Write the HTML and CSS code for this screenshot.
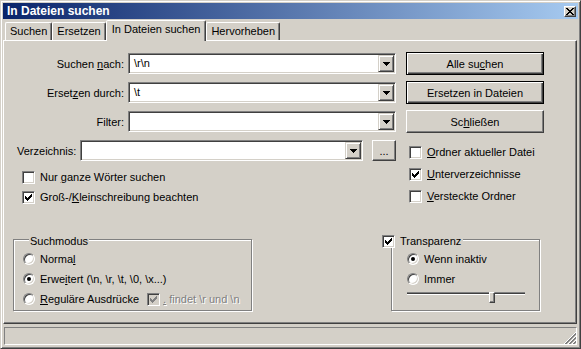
FILE: index.html
```html
<!DOCTYPE html>
<html lang="de">
<head>
    <meta charset="UTF-8">
    <title>In Dateien suchen</title>
    <link rel="stylesheet" href="styles.css">
</head>
<body>
    <div class="window">
        <div class="titlebar">
            <span>In Dateien suchen</span>
            <button class="close" aria-label="Schließen">
                <svg width="8" height="7" viewBox="0 0 8 7"><path d="M0 0h2v1H0zM6 0h2v1H6zM1 1h2v1H1zM5 1h2v1H5zM2 2h4v1H2zM3 3h2v1H3zM2 4h4v1H2zM1 5h2v1H1zM5 5h2v1H5zM0 6h2v1H0zM6 6h2v1H6z"/></svg>
            </button>
        </div>

        <div class="tabs">
            <div class="tab">Suchen</div>
            <div class="tab">Ersetzen</div>
            <div class="tab active">In Dateien suchen</div>
            <div class="tab">Hervorheben</div>
        </div>

        <div class="panel">
            <div class="top">
                <div class="form">
                    <div class="rows">
                        <div class="row">
                            <label>Suchen <u>n</u>ach:</label>
                            <div class="combo"><span class="value">\r\n</span><span class="drop"><svg width="7" height="4" viewBox="0 0 7 4"><path d="M0 0h7v1H0zM1 1h5v1H1zM2 2h3v1H2zM3 3h1v1H3z"/></svg></span></div>
                        </div>
                        <div class="row">
                            <label>Erset<u>z</u>en durch:</label>
                            <div class="combo"><span class="value">\t</span><span class="drop"><svg width="7" height="4" viewBox="0 0 7 4"><path d="M0 0h7v1H0zM1 1h5v1H1zM2 2h3v1H2zM3 3h1v1H3z"/></svg></span></div>
                        </div>
                        <div class="row">
                            <label>Filter:</label>
                            <div class="combo"><span class="value"></span><span class="drop"><svg width="7" height="4" viewBox="0 0 7 4"><path d="M0 0h7v1H0zM1 1h5v1H1zM2 2h3v1H2zM3 3h1v1H3z"/></svg></span></div>
                        </div>
                        <div class="row dir">
                            <label>Verzeichnis:</label>
                            <div class="combo"><span class="value"></span><span class="drop"><svg width="7" height="4" viewBox="0 0 7 4"><path d="M0 0h7v1H0zM1 1h5v1H1zM2 2h3v1H2zM3 3h1v1H3z"/></svg></span></div>
                            <button class="btn browse">...</button>
                        </div>
                    </div>
                    <div class="checks left">
                        <div class="opt"><span class="check"></span><span>Nur <u>g</u>anze Wörter suchen</span></div>
                        <div class="opt"><span class="check"><svg width="7" height="7" viewBox="0 0 7 7"><path d="M6 0h1v1H6zM5 1h2v1H5zM0 2h1v1H0zM4 2h3v1H4zM0 3h2v1H0zM3 3h3v1H3zM0 4h5v1H0zM1 5h3v1H1zM2 6h1v1H2z"/></svg></span><span>Groß-/<u>K</u>leinschreibung beachten</span></div>
                    </div>
                </div>

                <div class="side">
                    <div class="buttons">
                        <button class="btn default">Alle su<u>c</u>hen</button>
                        <button class="btn default">Ersetzen in Dateien</button>
                        <button class="btn">Sc<u>h</u>ließen</button>
                    </div>
                    <div class="checks right">
                        <div class="opt"><span class="check"></span><span><u>O</u>rdner aktueller Datei</span></div>
                        <div class="opt"><span class="check"><svg width="7" height="7" viewBox="0 0 7 7"><path d="M6 0h1v1H6zM5 1h2v1H5zM0 2h1v1H0zM4 2h3v1H4zM0 3h2v1H0zM3 3h3v1H3zM0 4h5v1H0zM1 5h3v1H1zM2 6h1v1H2z"/></svg></span><span><u>U</u>nterverzeichnisse</span></div>
                        <div class="opt"><span class="check"></span><span><u>V</u>ersteckte Ordner</span></div>
                    </div>
                </div>
            </div>

            <div class="groups">
                <fieldset class="group mode">
                    <legend>Suchmodus</legend>
                    <div class="opt"><span class="radio"></span><span>Norma<u>l</u></span></div>
                    <div class="opt"><span class="radio on"></span><span>Erwe<u>i</u>tert (\n, \r, \t, \0, \x...)</span></div>
                    <div class="opt"><span class="radio"></span><span><u>R</u>eguläre Ausdrücke</span><span class="check disabled"><svg width="7" height="7" viewBox="0 0 7 7"><path d="M6 0h1v1H6zM5 1h2v1H5zM0 2h1v1H0zM4 2h3v1H4zM0 3h2v1H0zM3 3h3v1H3zM0 4h5v1H0zM1 5h3v1H1zM2 6h1v1H2z"/></svg></span><span class="grayed"><u>.</u> findet \r und \n</span></div>
                </fieldset>

                <fieldset class="group transp">
                    <legend><span class="check"><svg width="7" height="7" viewBox="0 0 7 7"><path d="M6 0h1v1H6zM5 1h2v1H5zM0 2h1v1H0zM4 2h3v1H4zM0 3h2v1H0zM3 3h3v1H3zM0 4h5v1H0zM1 5h3v1H1zM2 6h1v1H2z"/></svg></span>Transparenz</legend>
                    <div class="opt"><span class="radio on"></span><span>Wenn inaktiv</span></div>
                    <div class="opt"><span class="radio"></span><span>Immer</span></div>
                    <div class="slider">
                        <div class="track"></div>
                        <div class="thumb" style="left: 82px"></div>
                    </div>
                </fieldset>
            </div>
        </div>

        <div class="statusbar">
            <svg width="12" height="12" viewBox="0 0 12 12"><path d="M12 0L0 12M12 4L4 12M12 8L8 12" stroke="#fff"/><path d="M12 1L1 12M12 2L2 12M12 5L5 12M12 6L6 12M12 9L9 12M12 10L10 12" stroke="#808080"/></svg>
        </div>
    </div>
</body>
</html>
```

FILE: styles.css
```css
* {
    box-sizing: border-box;
}
body {
    margin: 0;
    font-family: "Liberation Sans", Arial, sans-serif;
    font-size: 11px;
    color: #000;
    background-color: #d4d0c8;
}
button {
    font: inherit;
    color: inherit;
    margin: 0;
    padding: 0;
    background-color: #d4d0c8;
}
.window {
    width: 581px;
    height: 349px;
    display: flex;
    flex-direction: column;
    padding: 2px;
    border: 1px solid;
    border-color: #d4d0c8 #404040 #404040 #d4d0c8;
    box-shadow: inset 1px 1px #fff, inset -1px -1px #808080;
}
.titlebar {
    height: 16px;
    display: flex;
    align-items: center;
    justify-content: space-between;
    padding: 0 2px 0 4px;
    background: linear-gradient(to right, #0a246a, #a6caf0);
    color: #fff;
    font-size: 12px;
    font-weight: bold;
}
.close {
    width: 12px;
    height: 11px;
    display: flex;
    align-items: center;
    justify-content: center;
    border: 1px solid;
    border-color: #fff #404040 #404040 #fff;
    box-shadow: inset -1px -1px #808080;
}

/* tabs */
.tabs {
    height: 20px;
    margin-top: 1px;
    display: flex;
    align-items: flex-end;
    padding-left: 2px;
}
.tab {
    height: 18px;
    padding: 0 4px;
    line-height: 16px;
    border: 1px solid;
    border-bottom: none;
    border-color: #fff #404040 transparent #fff;
    border-radius: 2px 2px 0 0;
    box-shadow: inset -1px 0 #808080;
}
.tab.active {
    position: relative;
    height: 21px;
    margin-bottom: -1px;
    padding: 0 5px;
    line-height: 17px;
    background-color: #d4d0c8;
}
.panel {
    flex: 1;
    margin-right: 1px;
    padding-top: 11px;
    border: 1px solid;
    border-color: #fff #404040 #404040 #fff;
    box-shadow: inset -1px -1px #808080;
}

/* upper part */
.top {
    display: flex;
    gap: 10px;
    padding-left: 13px;
}
.form {
    width: 379px;
    margin-top: 1px;
}
.rows {
    display: flex;
    flex-direction: column;
    gap: 8px;
}
.row {
    height: 21px;
    display: flex;
    align-items: center;
    gap: 4px;
}
.row label {
    width: 107px;
    flex-shrink: 0;
    text-align: right;
}
.row.dir label {
    width: auto;
    text-align: left;
}
.row.dir .browse {
    width: 24px;
    height: 21px;
    margin-left: 5px;
    line-height: 12px;
}
.combo {
    flex: 1;
    height: 21px;
    display: flex;
    padding: 2px;
    background-color: #fff;
    border: 1px solid;
    border-color: #808080 #fff #fff #808080;
    box-shadow: inset 1px 1px #404040, inset -1px -1px #d4d0c8;
}
.combo .value {
    flex: 1;
    padding-left: 3px;
    line-height: 15px;
}
.drop {
    width: 16px;
    margin: -1px -1px -1px 0;
    display: flex;
    align-items: center;
    justify-content: center;
    background-color: #d4d0c8;
    border: 1px solid;
    border-color: #d4d0c8 #404040 #404040 #d4d0c8;
    box-shadow: inset 1px 1px #fff, inset -1px -1px #808080;
}
.btn {
    height: 23px;
    border: 1px solid;
    border-color: #fff #404040 #404040 #fff;
    box-shadow: inset -1px -1px #808080;
}
.btn.default {
    border-color: #000;
    box-shadow: inset 1px 1px #fff, inset -1px -1px #404040, inset -2px -2px #808080;
}
.side {
    width: 138px;
}
.buttons {
    display: flex;
    flex-direction: column;
    gap: 6px;
}
.checks.left {
    margin-top: 6px;
    padding-left: 5px;
}
.checks.left .opt {
    height: 20px;
}
.checks.right {
    margin-top: 8px;
    padding-left: 3px;
}
.checks.right .opt {
    height: 22px;
}
.opt {
    display: flex;
    align-items: center;
    height: 20px;
    white-space: nowrap;
}
.check {
    width: 13px;
    height: 13px;
    flex-shrink: 0;
    margin-right: 5px;
    display: flex;
    align-items: center;
    justify-content: center;
    background-color: #fff;
    border: 1px solid;
    border-color: #808080 #fff #fff #808080;
    box-shadow: inset 1px 1px #404040, inset -1px -1px #d4d0c8;
}
.check.disabled {
    margin-left: 8px;
    margin-right: 3px;
    background-color: #d4d0c8;
    fill: #808080;
}
.grayed {
    color: #808080;
    text-shadow: 1px 1px #fff;
}
.radio {
    width: 12px;
    height: 12px;
    flex-shrink: 0;
    margin-right: 5px;
    display: flex;
    align-items: center;
    justify-content: center;
    border-radius: 50%;
    background-color: #fff;
    border: 1px solid;
    border-color: #808080 #fff #fff #808080;
    box-shadow: inset 1px 1px #404040, inset -1px -1px #d4d0c8;
}
.radio.on::after {
    content: "";
    width: 4px;
    height: 4px;
    border-radius: 50%;
    background-color: #000;
}

/* group boxes */
.groups {
    display: flex;
    gap: 139px;
    margin-top: 23px;
    padding-left: 9px;
}
.group {
    margin: 0;
    min-width: 0;
    border: 1px solid #808080;
    box-shadow: 1px 1px #fff, inset 1px 1px #fff;
}
.group legend {
    padding: 5px 1px 0;
    line-height: 13px;
    background-color: #d4d0c8;
}
.mode {
    width: 239px;
    padding: 1px 0 1px 9px;
}
.mode legend {
    margin-left: 6px;
}
.transp {
    width: 149px;
    padding: 1px 0 0 15px;
}
.transp legend {
    display: flex;
    align-items: center;
    margin-left: -25px;
    padding-left: 0;
    padding-right: 2px;
}
.slider {
    position: relative;
    width: 118px;
    height: 11px;
    margin-top: 3px;
}
.track {
    margin-top: 3px;
    height: 3px;
    border-top: 1px solid #808080;
    border-bottom: 1px solid #fff;
    background-color: #404040;
}
.thumb {
    position: absolute;
    top: 0;
    width: 6px;
    height: 11px;
    background-color: #d4d0c8;
    border: 1px solid;
    border-color: #fff #404040 #404040 #fff;
    box-shadow: inset -1px -1px #808080;
}

.statusbar {
    height: 18px;
    margin: 3px 1px 1px;
    display: flex;
    justify-content: flex-end;
    align-items: flex-end;
    border: 1px solid;
    border-color: #808080 #fff #fff #808080;
}
```
